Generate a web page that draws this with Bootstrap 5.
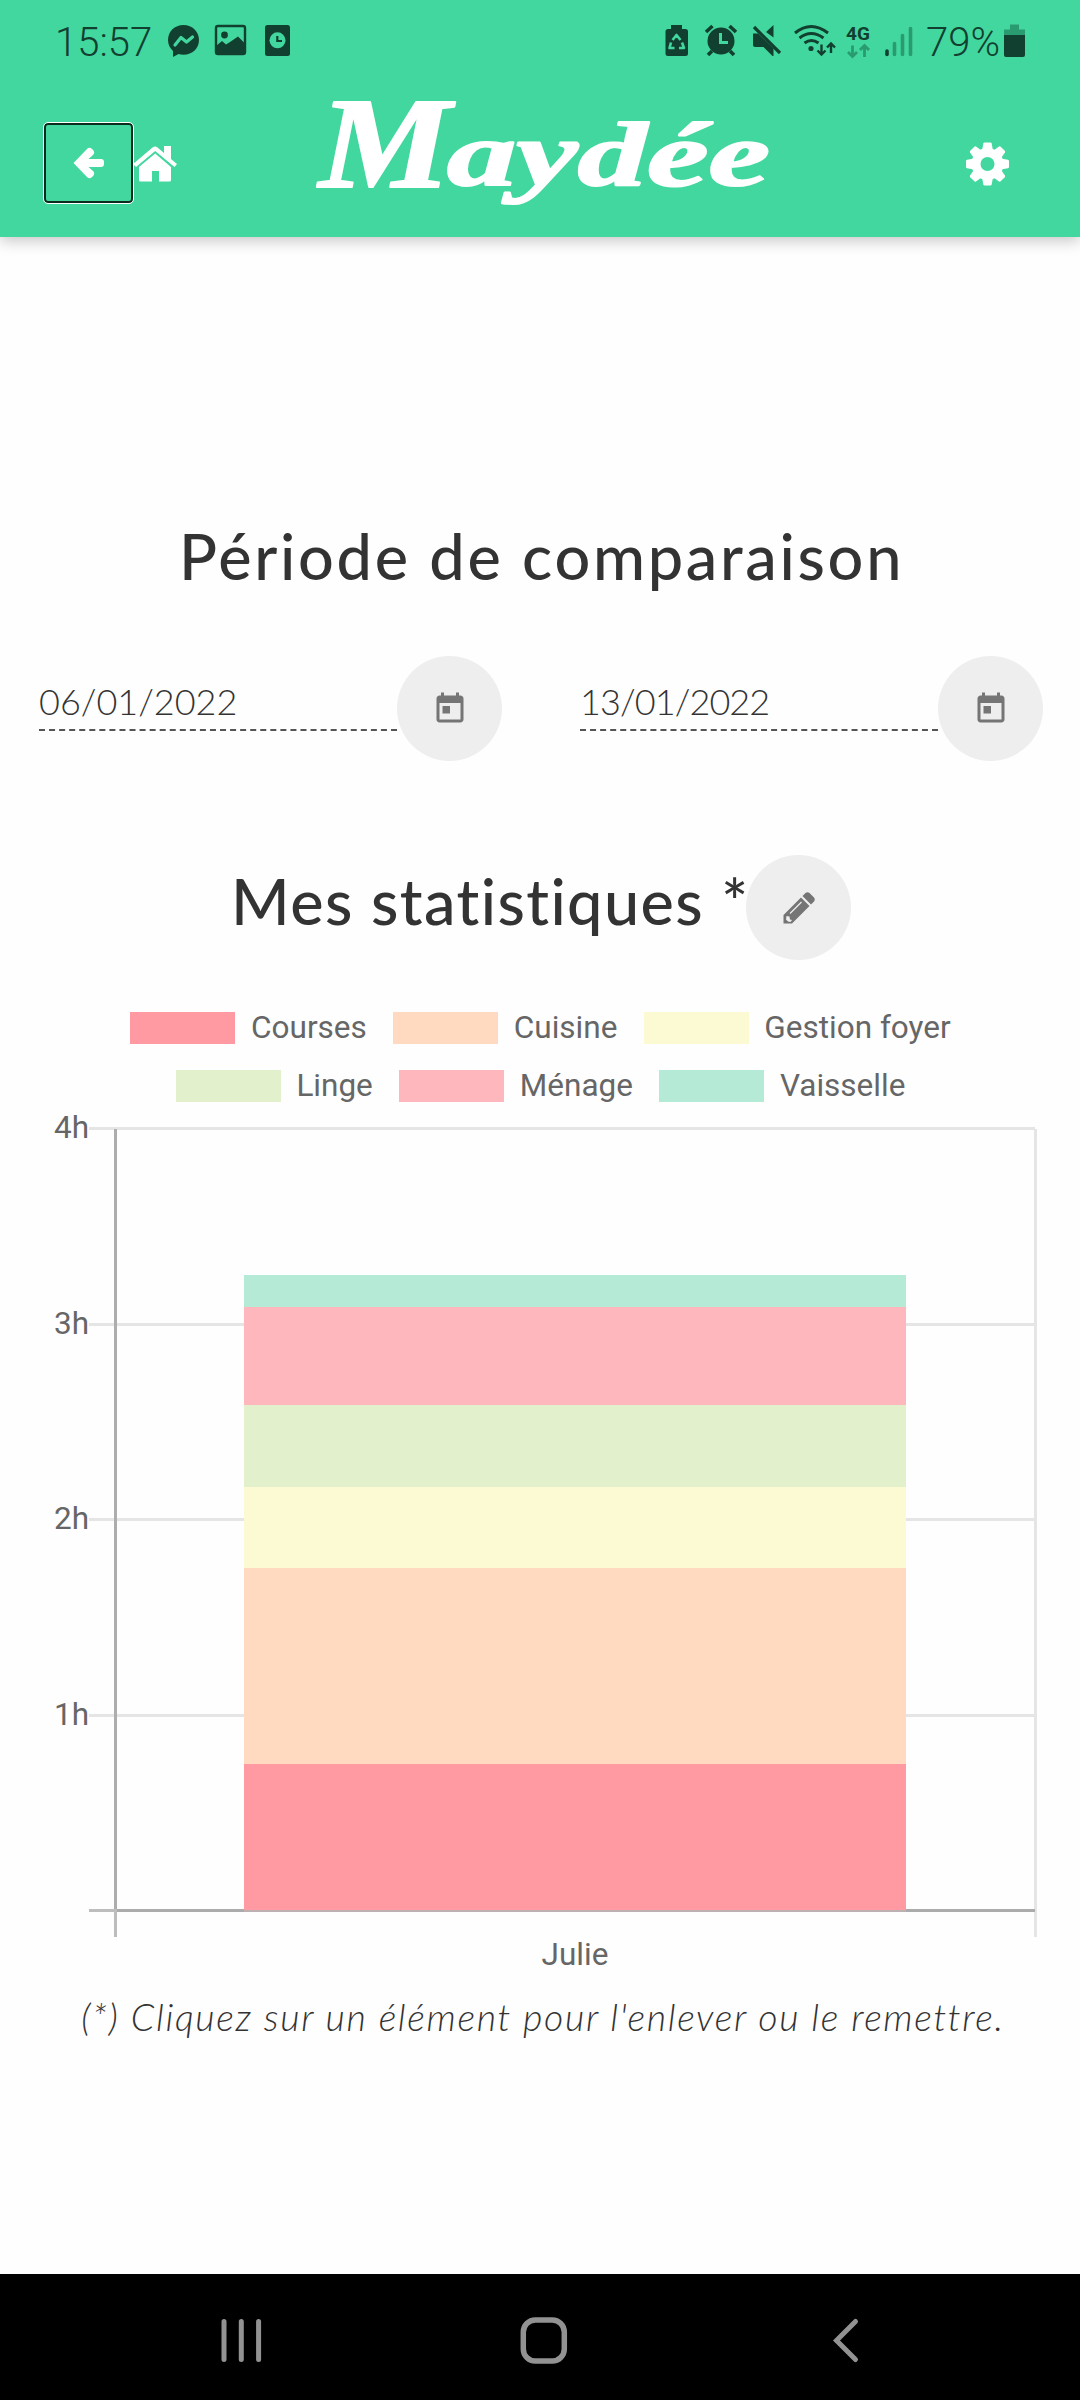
<!DOCTYPE html>
<html lang="fr">
<head>
  <meta charset="UTF-8">
  <meta name="viewport" content="width=device-width, initial-scale=1.0">
  <title>Maydée - Mes statistiques</title>
  <link href="https://cdn.jsdelivr.net/npm/bootstrap@5.3.2/dist/css/bootstrap.min.css" rel="stylesheet">
  <style>
    body {
      background-color: #fefefe;
      color: #333;
      font-family: Lato, "Open Sans", sans-serif;
      min-height: 2400px;
      overflow-x: hidden;
    }

    svg { display: block; flex: none; }

    /* Header */
    .app-header {
      height: 237px;
      background-color: #42d79e;
      box-shadow: 0 4px 14px rgba(0, 0, 0, .22);
    }
    .status-bar {
      height: 82px;
      color: #124030;
      fill: #124030;
      font: 300 40px/85px Roboto, sans-serif;
    }
    .status-time { width: 162px; padding-left: 55px; }
    .status-pct { width: 77px; }
    .toolbar { height: 155px; color: #fff; fill: #fff; }
    .btn-back {
      width: 91px;
      height: 82px;
      margin-left: 43px;
      margin-top: 40px;
      border: 1px solid #fff;
      border-radius: 5px;
      box-shadow: inset 0 0 0 2px #0b2a1e;
    }
    .brand-logo {
      font-family: "Liberation Serif", serif;
      font-weight: 700;
      font-style: italic;
      overflow: visible;
      stroke: #fff;
      stroke-width: 2;
      stroke-linejoin: round;
    }

    /* Titles */
    .page-title {
      font-size: 63px;
      font-weight: 500;
      line-height: 74px;
      letter-spacing: 2.7px;
      margin: 0;
      white-space: nowrap;
    }
    .title-period { padding-top: 282px; padding-left: 3px; }

    /* Date fields */
    .period-row { padding-top: 63px; }
    .date-field { padding-left: 39px; }
    .date-field + .date-field { padding-left: 40px; }
    .date-value {
      width: 358px;
      height: 75px;
      border-bottom: 2px dashed #555;
      font-size: 36px;
      font-weight: 300;
      line-height: 90px;
      white-space: nowrap;
    }
    .date-field + .date-field .date-value { letter-spacing: -.9px; }
    .btn-round {
      width: 105px;
      height: 105px;
      background-color: #eee;
      fill: #757575;
      flex: none;
    }
    .stats-row { padding-top: 94px; padding-left: 231px; }
    .stats-row .page-title { width: 515px; padding-top: 9px; letter-spacing: 1.4px; }

    /* Chart */
    .chart-legend {
      padding: 39px 0 3px 1px;
      font: 31.5px/58px Roboto, sans-serif;
      color: #666;
    }
    .legend-line { gap: 26.25px; height: 58px; }
    .legend-item { gap: 15.75px; }
    .legend-box { width: 105px; height: 31.5px; }
    .chart { overflow: visible; }
    .chart text { font: 31.5px Roboto, sans-serif; fill: #666; }
    .chart-note {
      font-size: 37.5px;
      font-weight: 300;
      line-height: 58px;
      letter-spacing: 1.65px;
      padding-left: 6px;
      white-space: nowrap;
    }

    /* Android navigation */
    .nav-keys { height: 126px; background-color: #000; stroke: #929292; fill: none; }
  </style>
</head>
<body class="d-flex flex-column">

  <header class="app-header">
    <div class="status-bar d-flex justify-content-between">
      <div class="d-flex">
        <span class="status-time">15:57</span>
        <!-- messenger -->
        <svg width="43" height="82" viewBox="162 0 43 82">
          <path d="M183.500 25c-9 0-15.500 6.500-15.500 15 0 4.500 2 8.500 5 11v6l5.500-3c1.600.5 3.200.7 5 .7 9 0 15.500-6.500 15.500-14.700S192.500 25 183.500 25z"/>
          <path d="M175 45l6-7.500 5.500 4.500 6-5" fill="none" stroke="#42d79e" stroke-width="3.200" stroke-linejoin="round" stroke-linecap="round"/>
        </svg>
        <!-- picture -->
        <svg width="50" height="82" viewBox="205 0 50 82">
          <rect x="216" y="26" width="29" height="28" rx="2" fill="none" stroke="#124030" stroke-width="2.400"/>
          <circle cx="224.500" cy="35" r="3.400"/>
          <path d="M216 46l6-5 4 3.500 4-2.500 8-5.500 7 7V54h-29z"/>
        </svg>
        <!-- clock card -->
        <svg width="45" height="82" viewBox="255 0 45 82">
          <rect x="265" y="25" width="25" height="31" rx="2.500"/>
          <circle cx="277.500" cy="40.300" r="8" fill="#42d79e"/>
          <path d="M277.300 36v5h4.700" fill="none" stroke="#124030" stroke-width="2.200"/>
        </svg>
      </div>
      <div class="d-flex">
        <!-- battery saver -->
        <svg width="36" height="82" viewBox="660 0 36 82">
          <path d="M671 25h11v4h3.500q2.500 0 2.500 2.500v22q0 2.500-2.500 2.500h-17.500q-2.500 0-2.500-2.500v-22q0-2.500 2.500-2.500h3z"/>
          <path d="M672.500 40l4-5 4 5M671 42.500l-1.500 5.500h5M682 42.500l2 5.500h-5" fill="none" stroke="#42d79e" stroke-width="2.600" stroke-linejoin="round"/>
        </svg>
        <!-- alarm -->
        <svg width="48" height="82" viewBox="696 0 48 82">
          <circle cx="721" cy="41" r="13.500"/>
          <path d="M706 32l6.500-6M736 32l-6.500-6M712 51l-4 4M730 51l4 4" stroke="#124030" stroke-width="3.600"/>
          <path d="M720.500 33v9.500h7.500" fill="none" stroke="#42d79e" stroke-width="3"/>
        </svg>
        <!-- muted speaker -->
        <svg width="46" height="82" viewBox="744 0 46 82">
          <path d="M753 33.500h5l15.500 15V56h-1l-9-9H755q-2 0-2-2zM773.500 25v12.500l-7.500-5.500z"/>
          <path d="M754 27l26 26" stroke="#124030" stroke-width="3.200"/>
        </svg>
        <!-- wifi -->
        <svg width="52" height="82" viewBox="790 0 52 82">
          <path d="M795 33q16-13 33 0M799.500 38q11.500-9 24 0M804.500 43q7-5 14 0" fill="none" stroke="#124030" stroke-width="3"/>
          <circle cx="811" cy="48.500" r="2.600"/>
          <path d="M821.500 44.500V54M817.500 50.500l4 4 4-4M831 53V43.500M827 47.500l4-4 4 4" fill="none" stroke="#124030" stroke-width="2.400"/>
        </svg>
        <!-- 4G -->
        <svg width="36" height="82" viewBox="842 0 36 82">
          <text x="846" y="40" font-family="Roboto, sans-serif" font-size="19" font-weight="700" textLength="24">4G</text>
          <path d="M852.500 45.500V56M848 52l4.500 4.500 4.500-4.500M864.500 57V46.500M860 50l4.500-4.500 4.500 4.500" fill="none" stroke="#2a9a70" stroke-width="2.800"/>
        </svg>
        <!-- signal -->
        <svg width="48" height="82" viewBox="878 0 48 82">
          <g stroke-width="3.600" stroke-linecap="round">
            <path d="M887 51v3.500" stroke="#124030"/>
            <path d="M894.500 43.500v11M902.500 35.500v19M910.500 28.500v26" stroke="#2a9a70"/>
          </g>
        </svg>
        <span class="status-pct">79%</span>
        <!-- battery -->
        <svg width="77" height="82" viewBox="1003 0 77 82">
          <path d="M1010 24.500h9v5h6v6h-21v-6h6z" fill="#2a9a70"/>
          <path d="M1004 35h21v20q0 2-2 2h-17q-2 0-2-2z"/>
        </svg>
      </div>
    </div>

    <div class="toolbar d-flex">
      <a class="btn-back d-flex align-items-center justify-content-center align-self-start" href="#">
        <svg width="32" height="34" viewBox="0 0 32 34">
          <path d="M.5 17L14 3q2.500-2.500 5 0l1.300 1.300q2 2.500-.3 4.700l-4.500 4H28q3 0 3 3v2q0 3-3 3H15.500l4.500 4q2.300 2.200.3 4.700L19 31q-2.500 2.500-5 0z"/>
        </svg>
      </a>
      <!-- home -->
      <svg width="166" height="155" viewBox="134 82 166 155">
        <path d="M133 164l19.500-16.500q2.500-2 5 0L164 153v-7h7v13l6 5-2.500 3L155.200 151 136 167z"/>
        <path d="M155.200 153.500L171 167v13q0 1.500-1.500 1.500H159V171h-7v10.500h-11.500q-1.500 0-1.500-1.500v-13z"/>
      </svg>
      <!-- brand -->
      <svg class="brand-logo" width="490" height="155" viewBox="300 82 490 155">
        <text x="319" y="187" font-size="130" textLength="132" lengthAdjust="spacingAndGlyphs">M</text>
        <text x="447" y="185" font-size="90" textLength="323" lengthAdjust="spacingAndGlyphs">aydée</text>
      </svg>
      <!-- settings -->
      <svg width="290" height="155" viewBox="790 82 290 155">
        <g id="gear" transform="translate(987.500 164)"></g>
      </svg>
    </div>
  </header>

  <main class="flex-grow-1">
    <h1 class="page-title title-period text-center">Période de comparaison</h1>

    <div class="row g-0 period-row">
      <div class="col-6 date-field d-flex">
        <div class="date-value">06/01/2022</div>
        <div class="btn-round rounded-circle d-flex align-items-center justify-content-center">
          <svg width="36" height="36" viewBox="0 0 24 24"><path d="M19 3h-1V1h-2v2H8V1H6v2H5c-1.110 0-1.990.9-1.990 2L3 19c0 1.100.89 2 2 2h14c1.100 0 2-.9 2-2V5c0-1.100-.9-2-2-2zm0 16H5V8h14v11zM7 10h5v5H7z"/></svg>
        </div>
      </div>
      <div class="col-6 date-field d-flex">
        <div class="date-value">13/01/2022</div>
        <div class="btn-round rounded-circle d-flex align-items-center justify-content-center">
          <svg width="36" height="36" viewBox="0 0 24 24"><path d="M19 3h-1V1h-2v2H8V1H6v2H5c-1.110 0-1.990.9-1.990 2L3 19c0 1.100.89 2 2 2h14c1.100 0 2-.9 2-2V5c0-1.100-.9-2-2-2zm0 16H5V8h14v11zM7 10h5v5H7z"/></svg>
        </div>
      </div>
    </div>

    <div class="stats-row d-flex">
      <h1 class="page-title">Mes statistiques *</h1>
      <div class="btn-round rounded-circle d-flex align-items-center justify-content-center">
        <svg width="32" height="32" viewBox="0 0 32 32">
          <path d="M0.500 31.500V23L18 5.500l8.500 8.500L9 31.500zM19.500 4l3-3q2-1.500 4 0L31 5.500q1.500 2 0 4l-3 3z"/>
          <path d="M7 21.500L18.500 10" stroke="#eee" stroke-width="1.300"/>
          <path d="M3.500 24l3 .5.500 3 2 .500-1.500 2-2.500-.500-2-2z" fill="#eee"/>
        </svg>
      </div>
    </div>

    <div class="chart-legend" id="legend"></div>
    <svg class="chart" id="chart" width="1080" height="870" viewBox="0 1118 1080 870"></svg>
    <p class="chart-note fst-italic text-center mb-0">(*) Cliquez sur un élément pour l'enlever ou le remettre.</p>
  </main>

  <footer class="nav-keys">
    <svg width="1080" height="126" viewBox="0 2274 1080 126">
      <path d="M224 2321.500v38M241.300 2321.500v38M258.600 2321.500v38" stroke-width="5" stroke-linecap="round"/>
      <rect x="523.300" y="2320" width="41" height="41" rx="12" stroke-width="5.500"/>
      <path d="M855.500 2321.500l-19 19 19 19" stroke-width="5" stroke-linecap="round"/>
    </svg>
  </footer>

  <script src="https://cdn.jsdelivr.net/npm/bootstrap@5.3.2/dist/js/bootstrap.bundle.min.js"></script>
  <script>
    // durées en minutes
    const tasks = [
      { label: 'Courses', minutes: 45, color: '#ff9aa2' },
      { label: 'Cuisine', minutes: 60, color: '#ffdac1' },
      { label: 'Gestion foyer', minutes: 25, color: '#fcfad2' },
      { label: 'Linge', minutes: 25, color: '#e2f0cb' },
      { label: 'Ménage', minutes: 30, color: '#ffb7be' },
      { label: 'Vaisselle', minutes: 10, color: '#b5ead7' }
    ];

    // légende sur deux lignes
    document.getElementById('legend').innerHTML = [tasks.slice(0, 3), tasks.slice(3)].map(line => `
      <div class="legend-line d-flex justify-content-center">
        ${line.map(t => `
          <div class="legend-item d-flex align-items-center">
            <span class="legend-box" style="background-color:${t.color}"></span>
            <span>${t.label}</span>
          </div>`).join('')}
      </div>`).join('');

    // graphique empilé
    const zeroY = 1910.3, hour = 195.6;
    let out = '';
    for (let h = 0; h <= 4; h++) {
      const y = Math.round(zeroY - h * hour) - 1;
      out += `<rect x="89" y="${y}" width="946" height="3" fill="${h ? '#e5e5e5' : '#bdbdbd'}"/>`;
      if (h) out += `<text x="89" y="${y + 10.5}" text-anchor="end">${h}h</text>`;
    }
    out += '<rect x="1034" y="1129" width="3" height="808" fill="#e5e5e5"/>';
    out += '<rect x="114" y="1129" width="3" height="808" fill="#bdbdbd"/>';
    out += '<rect x="114" y="1129" width="3" height="780" fill="#adadad"/>';
    out += '<rect x="117" y="1909" width="918" height="3" fill="#ababab"/>';
    let barTop = zeroY;
    tasks.forEach(t => {
      const height = t.minutes / 60 * hour;
      barTop -= height;
      out += `<rect x="244.200" y="${barTop}" width="662" height="${height}" fill="${t.color}" shape-rendering="crispEdges"/>`;
    });
    out += '<rect x="244" y="1910" width="662" height="2" fill="#bcb0b2"/>';
    out += '<text x="575" y="1964.500" text-anchor="middle">Julie</text>';
    document.getElementById('chart').innerHTML = out;

    // roue dentée à huit dents
    let gear = '<circle r="11.500" fill="none" stroke="#fff" stroke-width="9"/>';
    for (let a = 0; a < 360; a += 45) {
      gear += `<path d="M-5.500-13l1.300-7.500q.3-1 1.300-1h5.800q1 0 1.300 1L5.500-13z" transform="rotate(${a})"/>`;
    }
    document.getElementById('gear').innerHTML = gear;
  </script>
</body>
</html>
